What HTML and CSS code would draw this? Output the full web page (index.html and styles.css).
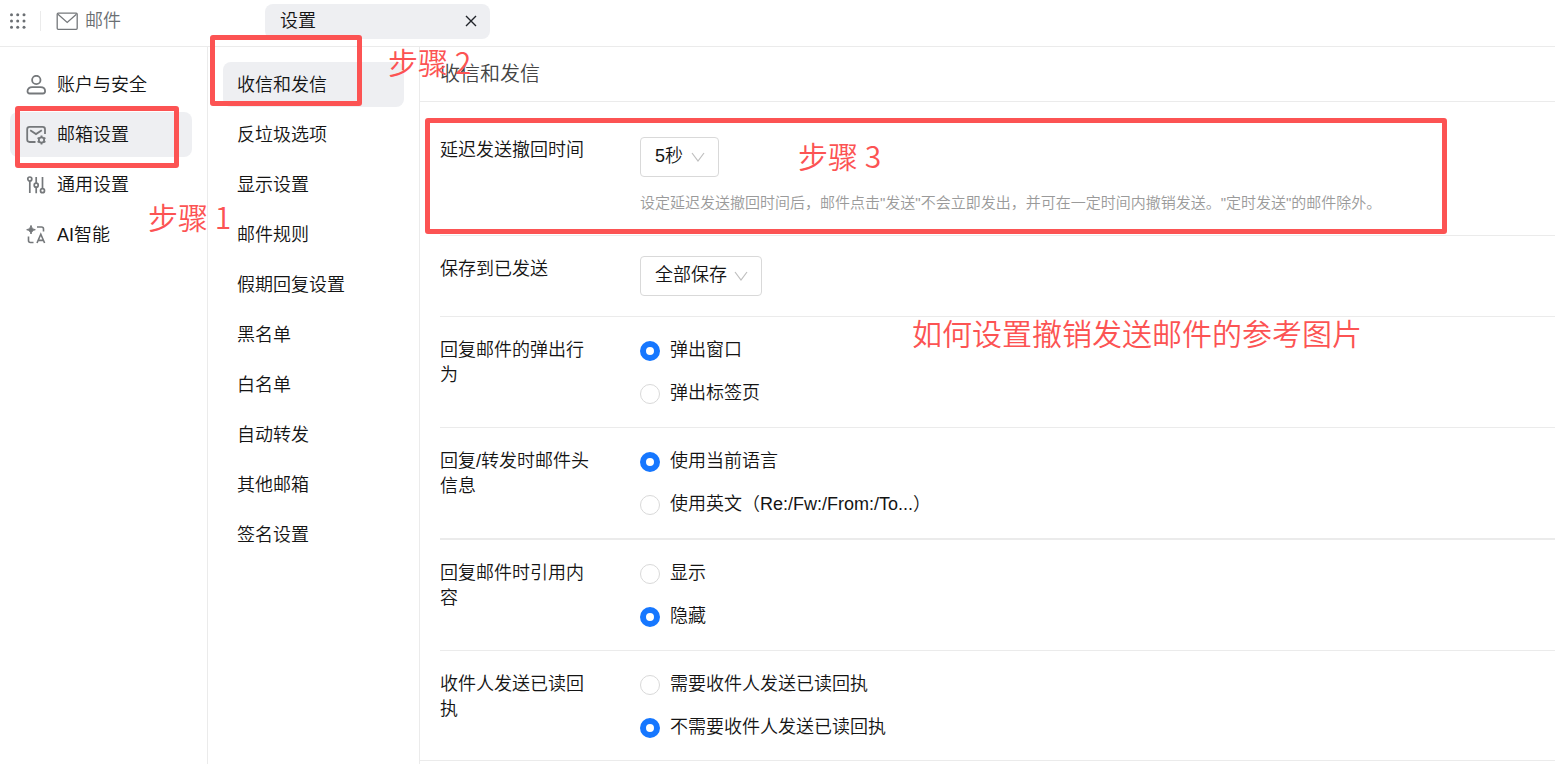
FILE: index.html
```html
<!DOCTYPE html>
<html lang="zh-CN">
<head>
    <meta charset="UTF-8">
    <meta name="viewport" content="width=device-width, initial-scale=1.0">
    <title>设置 - 邮件</title>
    <link rel="stylesheet" href="styles.css">
</head>
<body>
    <header class="topbar">
        <button class="icon-btn" aria-label="应用">
            <svg width="16" height="16" viewBox="0 0 16 16" fill="#6b6f73">
                <circle cx="1.5" cy="1.7" r="1.5"/><circle cx="7.7" cy="1.7" r="1.5"/><circle cx="14" cy="1.7" r="1.5"/>
                <circle cx="1.5" cy="8" r="1.5"/><circle cx="7.7" cy="8" r="1.5"/><circle cx="14" cy="8" r="1.5"/>
                <circle cx="1.5" cy="14.3" r="1.5"/><circle cx="7.7" cy="14.3" r="1.5"/><circle cx="14" cy="14.3" r="1.5"/>
            </svg>
        </button>
        <a class="brand" href="#">
            <svg width="22" height="18" viewBox="0 0 22 18" fill="none" stroke="#75787b" stroke-width="1.3">
                <rect x="1.2" y="1.2" width="20" height="16.1" rx="1"/>
                <path d="M2 2.2l9.2 8.200 9.200-8.200"/>
            </svg>
            邮件
        </a>
        <div class="tab">
            <span>设置</span>
            <button class="icon-btn" aria-label="关闭">
                <svg width="12" height="12" viewBox="0 0 12 12" fill="none" stroke="#1f2329" stroke-width="1.4">
                    <path d="M1 1l10 10M11 1L1 11"/>
                </svg>
            </button>
        </div>
    </header>

    <div class="layout">
        <nav class="sidebar">
            <a class="nav-item" href="#">
                <svg width="20" height="22" viewBox="0 0 20 22" fill="none" stroke="#75787b" stroke-width="1.8">
                    <circle cx="10.3" cy="5" r="4.2"/>
                    <path d="M1.5 16.3c0-2.700 2-4.100 4.600-4.100h8.400c2.600 0 4.600 1.400 4.600 4.100 0 1.600-.9 2.200-2.200 2.200H3.700c-1.300 0-2.200-.6-2.200-2.200z"/>
                </svg>
                账户与安全
            </a>
            <a class="nav-item active" href="#">
                <svg width="20" height="22" viewBox="0 0 20 22" fill="none" stroke="#75787b" stroke-width="1.8">
                    <path d="M9.500 17H3.600A2.400 2.400 0 0 1 1.200 14.600V4.300a2.400 2.400 0 0 1 2.400-2.400h13a2.400 2.400 0 0 1 2.400 2.400v4.600"/>
                    <path d="M4.200 5.300L10 9.100l5.800-3.800"/>
                    <circle cx="15.500" cy="15" r="2.700"/>
                    <path d="M15.500 10.500v2M15.500 17.500v2M11.600 12.700l1.700 1M17.700 16.200l1.700 1M11.600 17.300l1.700-1M17.700 13.700l1.700-1"/>
                </svg>
                邮箱设置
                <span class="mark mark-one"></span>
            </a>
            <a class="nav-item" href="#">
                <svg width="20" height="22" viewBox="0 0 20 22" fill="none" stroke="#75787b" stroke-width="1.7">
                    <circle cx="3.800" cy="4" r="2"/><path d="M3.800 6v12"/>
                    <circle cx="10.200" cy="10.200" r="2"/><path d="M10.200 2v6.200M10.200 12.200v6"/>
                    <circle cx="16.500" cy="15.700" r="2"/><path d="M16.500 2v11.700"/>
                </svg>
                通用设置
            </a>
            <a class="nav-item" href="#">
                <svg width="20" height="22" viewBox="0 0 20 22" fill="none" stroke="#75787b" stroke-width="1.6">
                    <path d="M5 .4c.8 2.800 1.500 3.500 4.300 4.300C6.500 5.500 5.800 6.200 5 9 4.200 6.200 3.500 5.500.7 4.700 3.500 3.900 4.200 3.200 5 .4z" fill="#75787b" stroke-width="1"/>
                    <path d="M11 2h4.500a2 2 0 0 1 2 2v2.500M2.500 11.500v4a2 2 0 0 0 2 2h3"/>
                    <path d="M11 18l3.800-8.800 3.800 8.800M12.300 15.400h5"/>
                </svg>
                AI智能
            </a>
            <span class="note note-one">步骤 1</span>
        </nav>

        <nav class="subnav">
            <a class="sub-item active" href="#">收信和发信<span class="mark mark-two"></span></a>
            <a class="sub-item" href="#">反垃圾选项</a>
            <a class="sub-item" href="#">显示设置</a>
            <a class="sub-item" href="#">邮件规则</a>
            <a class="sub-item" href="#">假期回复设置</a>
            <a class="sub-item" href="#">黑名单</a>
            <a class="sub-item" href="#">白名单</a>
            <a class="sub-item" href="#">自动转发</a>
            <a class="sub-item" href="#">其他邮箱</a>
            <a class="sub-item" href="#">签名设置</a>
        </nav>

        <main class="content">
            <h1 class="title">收信和发信</h1>
            <span class="note note-two">步骤 2</span>

            <form class="settings">
                <div class="row">
                    <label class="label" for="delay">延迟发送撤回时间</label>
                    <div class="field">
                        <div class="select">
                            <select id="delay"><option>5秒</option></select>
                            <svg class="arrow" width="14" height="10" viewBox="0 0 14 10" fill="none" stroke="#bfbfbf" stroke-width="1.2"><path d="M1 1l6 8 6-8"/></svg>
                        </div>
                        <p class="help">设定延迟发送撤回时间后，邮件点击"发送"不会立即发出，并可在一定时间内撤销发送。"定时发送"的邮件除外。</p>
                    </div>
                    <span class="mark mark-three"></span>
                    <span class="note note-three">步骤 3</span>
                </div>

                <div class="row">
                    <label class="label" for="save">保存到已发送</label>
                    <div class="field">
                        <div class="select">
                            <select id="save"><option>全部保存</option></select>
                            <svg class="arrow" width="14" height="10" viewBox="0 0 14 10" fill="none" stroke="#bfbfbf" stroke-width="1.2"><path d="M1 1l6 8 6-8"/></svg>
                        </div>
                    </div>
                </div>

                <div class="row" role="radiogroup" aria-labelledby="popup-label">
                    <div class="label" id="popup-label">回复邮件的弹出行为</div>
                    <div class="field radios">
                        <label class="radio"><input type="radio" name="popup" checked>弹出窗口</label>
                        <label class="radio"><input type="radio" name="popup">弹出标签页</label>
                    </div>
                    <span class="note note-caption">如何设置撤销发送邮件的参考图片</span>
                </div>

                <div class="row row-thick" role="radiogroup" aria-labelledby="head-label">
                    <div class="label" id="head-label">回复/转发时邮件头信息</div>
                    <div class="field radios">
                        <label class="radio"><input type="radio" name="head" checked>使用当前语言</label>
                        <label class="radio"><input type="radio" name="head">使用英文（Re:/Fw:/From:/To...）</label>
                    </div>
                </div>

                <div class="row" role="radiogroup" aria-labelledby="quote-label">
                    <div class="label" id="quote-label">回复邮件时引用内容</div>
                    <div class="field radios">
                        <label class="radio"><input type="radio" name="quote">显示</label>
                        <label class="radio"><input type="radio" name="quote" checked>隐藏</label>
                    </div>
                </div>

                <div class="row" role="radiogroup" aria-labelledby="receipt-label">
                    <div class="label" id="receipt-label">收件人发送已读回执</div>
                    <div class="field radios">
                        <label class="radio"><input type="radio" name="receipt">需要收件人发送已读回执</label>
                        <label class="radio"><input type="radio" name="receipt" checked>不需要收件人发送已读回执</label>
                    </div>
                </div>
            </form>
        </main>
    </div>
</body>
</html>
```
FILE: styles.css
```css
:root {
    --text: #141414;
    --text-muted: #9a9a9a;
    --icon: #6b6f73;
    --border: #ebebeb;
    --active: #eeeff2;
    --primary: #1677ff;
    --red: #fc5353;
}

* {
    box-sizing: border-box;
}

body {
    margin: 0;
    min-height: 100vh;
    display: flex;
    flex-direction: column;
    overflow: hidden;
    background: #fff;
    color: var(--text);
    font-family: "Liberation Sans", "Noto Sans CJK SC", sans-serif;
    font-size: 18px;
    font-weight: 350;
    line-height: 25px;
}

a {
    color: inherit;
    text-decoration: none;
}

svg {
    display: block;
    flex-shrink: 0;
}

.icon-btn {
    padding: 0;
    border: none;
    background: none;
    cursor: pointer;
}

/* Barra superior */
.topbar {
    display: flex;
    align-items: center;
    height: 47px;
    padding: 0 10px 4px;
    border-bottom: 1px solid var(--border);
}

.brand {
    display: flex;
    align-items: center;
    gap: 7px;
    width: 225px;
    height: 20px;
    margin-left: 14px;
    padding-left: 15px;
    border-left: 1px solid var(--border);
    color: var(--icon);
}

.tab {
    display: flex;
    align-items: center;
    justify-content: space-between;
    width: 225px;
    height: 35px;
    padding: 0 13px 0 15px;
    border-radius: 8px;
    background: var(--active);
}

.layout {
    flex: 1;
    display: flex;
}

/* Menus */
.sidebar,
.subnav {
    position: relative;
    display: flex;
    flex-direction: column;
    flex-shrink: 0;
    gap: 5px;
    padding: 15px;
    border-right: 1px solid var(--border);
}

.sidebar {
    width: 208px;
    padding-left: 10px;
}

.subnav {
    width: 212px;
}

.nav-item,
.sub-item {
    position: relative;
    display: flex;
    align-items: center;
    height: 45px;
    padding: 2px 14px 0;
    border-radius: 8px;
}

.nav-item {
    gap: 11px;
    padding: 2px 16px 0;
}

.nav-item.active,
.sub-item.active {
    background: var(--active);
}

/* Contenido */
.content {
    position: relative;
    flex: 1;
    min-width: 0;
}

.title {
    margin: 0;
    padding: 15px 20px 14px;
    border-bottom: 1px solid var(--border);
    color: #444;
    font-size: 20px;
    font-weight: 350;
    line-height: 25px;
}

.settings {
    padding: 15px 0 0 20px;
    border-bottom: 1px solid var(--border);
}

.row {
    position: relative;
    display: flex;
    gap: 50px;
    padding: 20px 0;
    border-bottom: 1px solid var(--border);
}

.row:last-child {
    padding-bottom: 19px;
    border-bottom: none;
}

.row-thick {
    border-bottom-width: 2px;
}

.label {
    flex-shrink: 0;
    width: 150px;
    padding-top: 1px;
}

.field {
    flex: 1;
    min-width: 0;
}

.select {
    position: relative;
    width: fit-content;
}

.select select {
    display: block;
    height: 40px;
    padding: 0 34px 2px 14px;
    border: 1px solid #d9d9d9;
    border-radius: 4px;
    appearance: none;
    background: #fff;
    color: inherit;
    font: inherit;
}

.arrow {
    position: absolute;
    top: 15px;
    right: 14px;
    pointer-events: none;
}

.help {
    margin: 13px 0 0;
    color: var(--text-muted);
    font-size: 15px;
}

.radios {
    display: flex;
    flex-direction: column;
    gap: 16px;
}

.radio {
    display: flex;
    align-items: center;
    gap: 10px;
    height: 27px;
}

.radio input {
    width: 20px;
    height: 20px;
    margin: 0;
    border: 1px solid #d9d9d9;
    border-radius: 50%;
    appearance: none;
    background: #fff;
}

.radio input:checked {
    border: 6px solid var(--primary);
}

/* Marcas rojas de los pasos */
.mark {
    position: absolute;
    z-index: 2;
    border: 5px solid var(--red);
    border-radius: 3px;
    pointer-events: none;
}

.mark-one {
    top: -6px;
    left: 5px;
    width: 164px;
    height: 62px;
}

.mark-two {
    top: -27px;
    left: -13px;
    width: 152px;
    height: 71px;
}

.mark-three {
    top: 1px;
    left: -15px;
    right: 108px;
    height: 116px;
}

.note {
    position: absolute;
    z-index: 3;
    color: var(--red);
    font-family: "Noto Sans CJK SC", sans-serif;
    font-size: 30px;
    line-height: 40px;
    white-space: nowrap;
}

.note-one {
    top: 149px;
    left: 148px;
}

.note-two {
    top: -6px;
    left: -32px;
}

.note-three {
    top: 18px;
    left: 358px;
}

.note-caption {
    top: -5px;
    left: 472px;
}
```
